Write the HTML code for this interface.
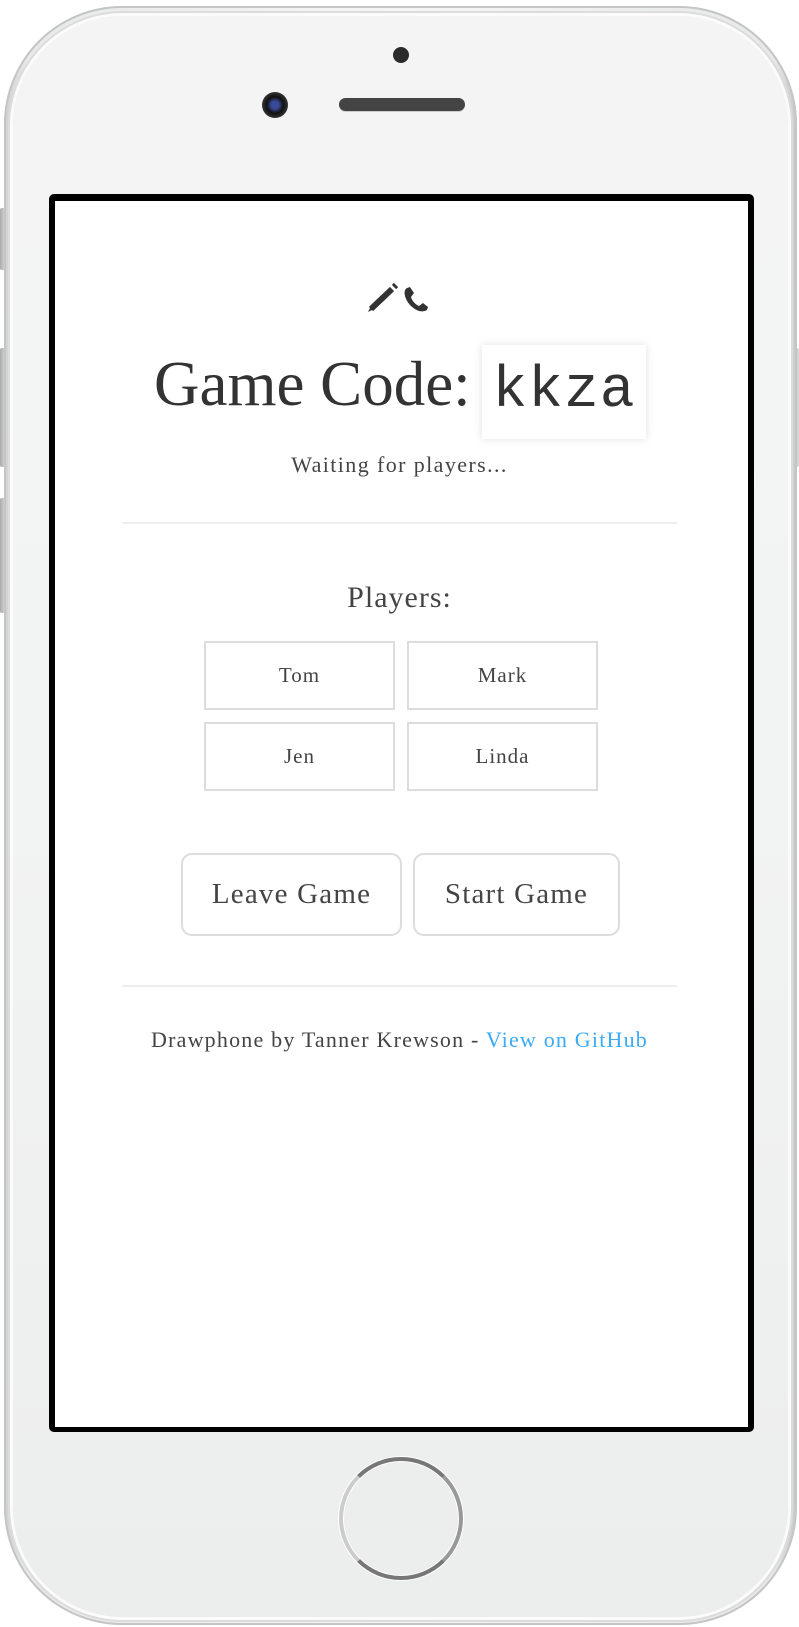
<!DOCTYPE html>
<html><head><meta charset="utf-8"><style>
*{margin:0;padding:0;box-sizing:border-box}
html,body{width:799px;height:1627px;background:#fff;overflow:hidden;position:relative;font-family:"Liberation Serif",serif;color:#333}
.abs{position:absolute}
.body{left:4px;top:6px;width:793px;height:1619px;border-radius:118px;background:linear-gradient(90deg,#cfd0d0,#e8e9e9 3%,#f6f6f6 50%,#e8e9e9 97%,#c8c9c9);box-shadow:inset 0 0 0 2px #c4c5c5}
.face{left:13px;top:16px;width:775px;height:1601px;border-radius:110px;background:linear-gradient(#f4f4f4,#f2f3f3 50%,#eceded);box-shadow:0 0 0 3px #fbfbfb, 0 0 0 5px #dcdcdc}
.btn{background:linear-gradient(90deg,#aaa,#ddd);width:6px;border-radius:2px}
.screen{left:49px;top:194px;width:705px;height:1238px;border:6px solid #000;border-top-width:7px;border-bottom-width:5px;border-radius:5px;background:#fff}
.c{position:absolute;left:0;width:799px;text-align:center}
.pbox{position:absolute;width:191px;height:69px;border:2px solid #ddd;font-size:21px;letter-spacing:1px;text-align:center;line-height:65px;color:#444}
.b{position:absolute;height:83px;border:2px solid #ddd;border-radius:11px;font-size:29px;letter-spacing:1.2px;text-align:center;line-height:79px;color:#444}
.hr{position:absolute;left:122px;width:555px;height:2px;background:#eee}
</style></head><body>
<div class="abs btn" style="left:0;top:208px;height:62px"></div>
<div class="abs btn" style="left:0;top:348px;height:119px"></div>
<div class="abs btn" style="left:0;top:498px;height:115px"></div>
<div class="abs btn" style="left:793px;top:348px;height:119px"></div>
<div class="abs body"></div>
<div class="abs face"></div>
<div class="abs" style="left:393px;top:47px;width:16px;height:16px;border-radius:50%;background:#2b2b2b"></div>
<div class="abs" style="left:262px;top:92px;width:26px;height:26px;border-radius:50%;background:radial-gradient(#3a4a9a 20%,#111 45%,#333 70%,#555);"></div>
<div class="abs" style="left:339px;top:98px;width:126px;height:13px;border-radius:7px;background:#444;box-shadow:0 1px 0 #ccc"></div>
<div class="abs screen"></div>
<svg class="abs" style="left:360px;top:282px" width="80" height="34" viewBox="0 0 80 34">
<path d="M11 27 L32 7" stroke="#333" stroke-width="6" stroke-linecap="butt"/>
<path d="M8 30 L11 24 L14 27 Z" fill="#333"/>
<path d="M34 5 L36 3" stroke="#333" stroke-width="6"/>
<path d="M47 6 C43 8 44 16 50 23 C56 29 62 31 67 28 L68 25 L63 21 L59 24 C56 23 52 19 51 15 L54 11 L50 5 Z" fill="#333"/>
</svg>
<div class="abs" style="left:154px;top:344px;font-size:63px;line-height:80px;white-space:nowrap">Game Code:</div>
<div class="abs" style="left:482px;top:345px;width:164px;height:94px;background:#fff;box-shadow:0 0 8px rgba(0,0,0,0.12);font-family:'Liberation Mono',monospace;font-size:58px;line-height:94px;text-align:center;color:#333;letter-spacing:1px">kkza</div>
<div class="c" style="top:452px;font-size:22px;letter-spacing:1.4px;line-height:26px;color:#444">Waiting for players...</div>
<div class="hr" style="top:522px"></div>
<div class="c" style="top:581px;font-size:30px;letter-spacing:1px;line-height:34px;color:#444">Players:</div>
<div class="pbox" style="left:204px;top:641px">Tom</div>
<div class="pbox" style="left:407px;top:641px">Mark</div>
<div class="pbox" style="left:204px;top:722px">Jen</div>
<div class="pbox" style="left:407px;top:722px">Linda</div>
<div class="b" style="left:181px;top:853px;width:221px">Leave Game</div>
<div class="b" style="left:413px;top:853px;width:207px">Start Game</div>
<div class="hr" style="top:985px"></div>
<div class="c" style="top:1027px;font-size:22px;letter-spacing:1.2px;line-height:26px;color:#444;white-space:nowrap">Drawphone by Tanner Krewson - <span style="color:#3aaaf5">View on GitHub</span></div>
<div class="abs" style="left:339px;top:1457px;width:124px;height:123px;border-radius:50%;border:4px solid #777;border-left-color:#ccc;border-right-color:#999;box-shadow:0 0 0 1px #fff,inset 0 0 0 1px #fff;background:#eceded"></div>
</body></html>
